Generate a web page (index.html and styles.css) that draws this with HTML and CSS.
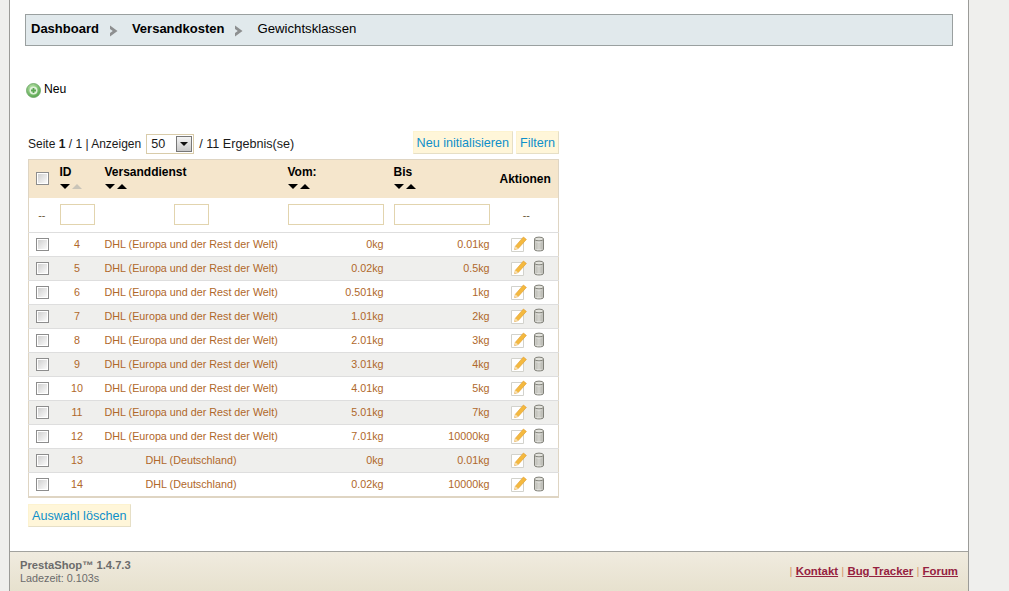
FILE: index.html
```html
<!DOCTYPE html>
<html lang="de">
<head>
<meta charset="utf-8">
<title>Gewichtsklassen</title>
<link rel="stylesheet" href="styles.css">
</head>
<body>
<svg class="defs" width="0" height="0" aria-hidden="true">
  <defs>
    <linearGradient id="cbg" x1="0" y1="0" x2="1" y2="1"><stop offset="0" stop-color="#d0d0d0"/><stop offset="1" stop-color="#fafafa"/></linearGradient>
    <linearGradient id="can" x1="0" y1="0" x2="1" y2="0"><stop offset="0" stop-color="#c2c2bc"/><stop offset=".5" stop-color="#f0f0ec"/><stop offset="1" stop-color="#b4b4ae"/></linearGradient>
    <radialGradient id="grn" cx=".4" cy=".3" r=".8"><stop offset="0" stop-color="#b8e2a8"/><stop offset="1" stop-color="#4d9f45"/></radialGradient>
    <symbol id="cb" viewBox="0 0 13 13"><rect x=".5" y=".5" width="12" height="12" fill="#fff" stroke="#8d8d8d"/><rect x="2" y="2" width="9" height="9" fill="url(#cbg)"/></symbol>
    <symbol id="edit" viewBox="0 0 16 16"><path d="M.5 2.5H12.5V15.5H.5Z" fill="#fff" stroke="#d2d2cc"/><path d="M3.6 13.6L4.4 10.2 12.4 1 15.4 3.4 7.2 12.6Z" fill="#f4b93f" stroke="#e09a2a" stroke-width=".6"/><path d="M3.6 13.6L4.4 10.2 7.2 12.6Z" fill="#f5dfb4"/></symbol>
    <symbol id="trash" viewBox="0 0 12 16"><path d="M1.5 3V13.5C1.5 15.4 10.5 15.4 10.5 13.5V3Z" fill="url(#can)" stroke="#808078"/><ellipse cx="6" cy="3" rx="4.5" ry="1.9" fill="#e2e2dc" stroke="#808078"/><path d="M4 6.5V13M6 6.5V13.5M8 6.5V13" stroke="#a4a49c" stroke-width=".7"/></symbol>
    <symbol id="chev" viewBox="0 0 9 12"><path d="M1 0.5L8.5 6 1 11.5 1 8 3.8 6 1 4Z" fill="#8d8f90"/></symbol>
    <symbol id="down" viewBox="0 0 10 5"><path d="M0 0H10L5 5Z"/></symbol>
    <symbol id="up" viewBox="0 0 10 5"><path d="M0 5H10L5 0Z"/></symbol>
  </defs>
</svg>
<div class="shell">
  <main class="main">
    <nav class="crumbs">
      <a class="crumb-link">Dashboard</a>
      <svg class="chev"><use href="#chev"/></svg>
      <a class="crumb-link">Versandkosten</a>
      <svg class="chev"><use href="#chev"/></svg>
      <span class="crumb-current">Gewichtsklassen</span>
    </nav>
    <a class="new-link">
      <svg class="plus" viewBox="0 0 15 15"><circle cx="7.5" cy="7.5" r="7" fill="url(#grn)" stroke="#6aa563" stroke-width=".8"/><circle cx="7.5" cy="7.5" r="4" fill="#dff0da"/><path d="M5 7.5H10M7.5 5V10" stroke="#5aa652" stroke-width="1.8"/></svg>
      Neu
    </a>
    <div class="list">
      <div class="toolbar">
        <div class="paging">
          <span>Seite <b>1</b> / 1 | Anzeigen</span>
          <span class="select"><span class="select-val">50</span><span class="select-btn"><i></i></span></span>
          <span class="results">/ 11 Ergebnis(se)</span>
        </div>
        <div class="actions">
          <span class="btn">Neu initialisieren</span>
          <span class="btn">Filtern</span>
        </div>
      </div>
      <table class="grid">
        <colgroup><col class="c1"><col class="c2"><col class="c3"><col class="c4"><col class="c5"><col class="c6"></colgroup>
        <thead>
          <tr class="head">
            <th class="cb-cell"><svg class="cb"><use href="#cb"/></svg></th>
            <th><div class="th-t">ID</div><div class="sort"><svg><use href="#down"/></svg><svg class="off"><use href="#up"/></svg></div></th>
            <th><div class="th-t">Versanddienst</div><div class="sort"><svg><use href="#down"/></svg><svg><use href="#up"/></svg></div></th>
            <th><div class="th-t">Vom:</div><div class="sort"><svg><use href="#down"/></svg><svg><use href="#up"/></svg></div></th>
            <th><div class="th-t">Bis</div><div class="sort"><svg><use href="#down"/></svg><svg><use href="#up"/></svg></div></th>
            <th class="th-act">Aktionen</th>
          </tr>
          <tr class="filters">
            <td class="dash">--</td>
            <td><input class="f f-s"></td>
            <td class="center"><input class="f f-s"></td>
            <td><input class="f f-l"></td>
            <td><input class="f f-l"></td>
            <td class="dash">--</td>
          </tr>
        </thead>
        <tbody>
          <tr><td class="cb-cell"><svg class="cb"><use href="#cb"/></svg></td><td class="center">4</td><td>DHL (Europa und der Rest der Welt)</td><td class="right">0kg</td><td class="right">0.01kg</td><td class="act"><svg class="edit"><use href="#edit"/></svg><svg class="trash"><use href="#trash"/></svg></td></tr>
          <tr><td class="cb-cell"><svg class="cb"><use href="#cb"/></svg></td><td class="center">5</td><td>DHL (Europa und der Rest der Welt)</td><td class="right">0.02kg</td><td class="right">0.5kg</td><td class="act"><svg class="edit"><use href="#edit"/></svg><svg class="trash"><use href="#trash"/></svg></td></tr>
          <tr><td class="cb-cell"><svg class="cb"><use href="#cb"/></svg></td><td class="center">6</td><td>DHL (Europa und der Rest der Welt)</td><td class="right">0.501kg</td><td class="right">1kg</td><td class="act"><svg class="edit"><use href="#edit"/></svg><svg class="trash"><use href="#trash"/></svg></td></tr>
          <tr><td class="cb-cell"><svg class="cb"><use href="#cb"/></svg></td><td class="center">7</td><td>DHL (Europa und der Rest der Welt)</td><td class="right">1.01kg</td><td class="right">2kg</td><td class="act"><svg class="edit"><use href="#edit"/></svg><svg class="trash"><use href="#trash"/></svg></td></tr>
          <tr><td class="cb-cell"><svg class="cb"><use href="#cb"/></svg></td><td class="center">8</td><td>DHL (Europa und der Rest der Welt)</td><td class="right">2.01kg</td><td class="right">3kg</td><td class="act"><svg class="edit"><use href="#edit"/></svg><svg class="trash"><use href="#trash"/></svg></td></tr>
          <tr><td class="cb-cell"><svg class="cb"><use href="#cb"/></svg></td><td class="center">9</td><td>DHL (Europa und der Rest der Welt)</td><td class="right">3.01kg</td><td class="right">4kg</td><td class="act"><svg class="edit"><use href="#edit"/></svg><svg class="trash"><use href="#trash"/></svg></td></tr>
          <tr><td class="cb-cell"><svg class="cb"><use href="#cb"/></svg></td><td class="center">10</td><td>DHL (Europa und der Rest der Welt)</td><td class="right">4.01kg</td><td class="right">5kg</td><td class="act"><svg class="edit"><use href="#edit"/></svg><svg class="trash"><use href="#trash"/></svg></td></tr>
          <tr><td class="cb-cell"><svg class="cb"><use href="#cb"/></svg></td><td class="center">11</td><td>DHL (Europa und der Rest der Welt)</td><td class="right">5.01kg</td><td class="right">7kg</td><td class="act"><svg class="edit"><use href="#edit"/></svg><svg class="trash"><use href="#trash"/></svg></td></tr>
          <tr><td class="cb-cell"><svg class="cb"><use href="#cb"/></svg></td><td class="center">12</td><td>DHL (Europa und der Rest der Welt)</td><td class="right">7.01kg</td><td class="right">10000kg</td><td class="act"><svg class="edit"><use href="#edit"/></svg><svg class="trash"><use href="#trash"/></svg></td></tr>
          <tr><td class="cb-cell"><svg class="cb"><use href="#cb"/></svg></td><td class="center">13</td><td class="center">DHL (Deutschland)</td><td class="right">0kg</td><td class="right">0.01kg</td><td class="act"><svg class="edit"><use href="#edit"/></svg><svg class="trash"><use href="#trash"/></svg></td></tr>
          <tr><td class="cb-cell"><svg class="cb"><use href="#cb"/></svg></td><td class="center">14</td><td class="center">DHL (Deutschland)</td><td class="right">0.02kg</td><td class="right">10000kg</td><td class="act"><svg class="edit"><use href="#edit"/></svg><svg class="trash"><use href="#trash"/></svg></td></tr>
        </tbody>
      </table>
      <span class="btn btn-del">Auswahl löschen</span>
    </div>
  </main>
  <footer class="foot">
    <div>
      <div class="ver">PrestaShop™ 1.4.7.3</div>
      <div class="load">Ladezeit: 0.103s</div>
    </div>
    <div class="foot-links"><i>|</i> <a>Kontakt</a> <i>|</i> <a>Bug Tracker</a> <i>|</i> <a>Forum</a></div>
  </footer>
</div>
</body>
</html>
```

FILE: styles.css
```css
html, body { margin: 0; padding: 0; height: 100%; }
body { background: #efefed; font-family: "Liberation Sans", Arial, sans-serif; color: #000; overflow: hidden; }
.defs { display: block; height: 0; }
.shell { margin-left: 9px; width: 958px; height: 591px; background: #fff; border-left: 1px solid #9b9b98; border-right: 1px solid #9b9b98; display: flex; flex-direction: column; }
.main { flex: 1; padding: 14px 15px 0 15px; min-height: 0; }
.crumbs { height: 27px; padding: 0 0 3px 5px; border: 1px solid #9aa0a0; background: #e1e9ec; display: flex; align-items: center; font-size: 13px; }
.crumb-link { font-weight: bold; }
.chev { width: 9px; height: 12px; margin: 4px 14px 0 10px; }
.crumb-current { font-size: 13.2px; }
.new-link { display: flex; align-items: center; gap: 3px; margin: 35px 0 0 1px; font-size: 12.2px; height: 16px; }
.plus { width: 15px; height: 15px; margin-top: 2px; }
.list { margin: 0 0 0 3px; width: 531px; }
.toolbar { display: flex; justify-content: space-between; margin-top: 34px; height: 23px; margin-bottom: 5px; }
.paging { display: flex; align-items: center; gap: 5px; font-size: 12px; color: #1a1a1a; padding-top: 2px; }
.results { font-size: 12.6px; }
.select { display: flex; align-items: center; width: 46px; height: 18px; border: 1px solid #d9ccaa; background: #fff; font-size: 12.6px; }
.select-val { flex: 1; padding-left: 4px; }
.select-btn { width: 16px; height: 16px; background: linear-gradient(#f4f4f4, #c9c9c9); border: 1px solid #777; box-sizing: border-box; display: flex; align-items: center; justify-content: center; margin-right: 1px; }
.select-btn i { border: 4px solid transparent; border-top: 4px solid #111; border-bottom: 0; }
.actions { display: flex; gap: 3px; }
.btn { display: inline-block; box-sizing: border-box; background: #fff6d9; border: 1px solid #fdf3d0; border-right-color: #e6dfc6; border-bottom-color: #e6dfc6; padding: 0 3px; height: 23px; line-height: 23px; font-size: 12.6px; color: #0e8fc9; }
.grid { border-collapse: collapse; table-layout: fixed; width: 530px; border: 1px solid #dfd5c3; border-bottom-width: 2px; font-size: 10.75px; color: #b0682a; }
.c1 { width: 26px; } .c2 { width: 45px; } .c3 { width: 183px; } .c4 { width: 106px; } .c5 { width: 106px; } .c6 { width: 64px; }
.grid td, .grid th { padding: 0 5px; white-space: nowrap; }
.head { background: #f5e6cc; height: 38px; color: #000; font-size: 12px; text-align: left; }
.head th { vertical-align: top; padding-top: 5px; }
.head .cb-cell { vertical-align: middle; padding-top: 0; }
.head .th-act { vertical-align: middle; padding: 0 0 0 5px; text-align: left; }
.th-t { height: 16px; line-height: 15px; }
.sort { display: flex; gap: 2px; height: 8px; padding-top: 2px; }
.sort svg { width: 10px; height: 5px; fill: #000; margin-top: 1px; }
.sort .off { fill: #c9c4b8; }
.filters { height: 35px; border-bottom: 1px solid #dedede; }
.filters td { vertical-align: middle; }
.dash { text-align: center; color: #6b5a3a; }
.f { display: block; box-sizing: border-box; height: 21px; border: 1px solid #e2d4ae; background: #fff; padding: 0; }
.f-s { width: 35px; }
.f-l { width: 96px; }
.center .f { margin: 0 auto; }
tbody tr { height: 24px; border-bottom: 1px solid #dedede; }
tbody tr:nth-child(even) { background: #efefed; }
tbody td { padding-bottom: 2px !important; }
tbody tr:last-child td { padding-bottom: 0 !important; }
tbody .cb-cell { padding-bottom: 0 !important; }
.center { text-align: center; }
.right { text-align: right; }
.cb { display: block; width: 13px; height: 13px; margin-left: 7px; }
.cb-cell { padding: 0 !important; }
.act { white-space: nowrap; padding-left: 16px !important; padding-right: 0 !important; }
.act svg { vertical-align: middle; }
.edit { width: 16px; height: 16px; margin-right: 6px; }
.trash { width: 12px; height: 16px; }
.btn-del { margin: 6px 0 0 0; }
.foot { flex: none; border-top: 1px solid #a2a29e; background: linear-gradient(#f0ebdf, #e7e1ce); display: flex; justify-content: space-between; padding: 6px 10px 0 10px; height: 33px; }
.ver { font-size: 11.2px; font-weight: bold; color: #6b6b6b; line-height: 14px; }
.load { font-size: 10.8px; color: #6b6b6b; line-height: 13px; }
.foot-links { font-size: 11.4px; font-weight: bold; color: #95213f; padding-top: 7px; }
.foot-links a { text-decoration: underline; }
.foot-links i { font-style: normal; font-weight: normal; color: #d59a70; }
```
